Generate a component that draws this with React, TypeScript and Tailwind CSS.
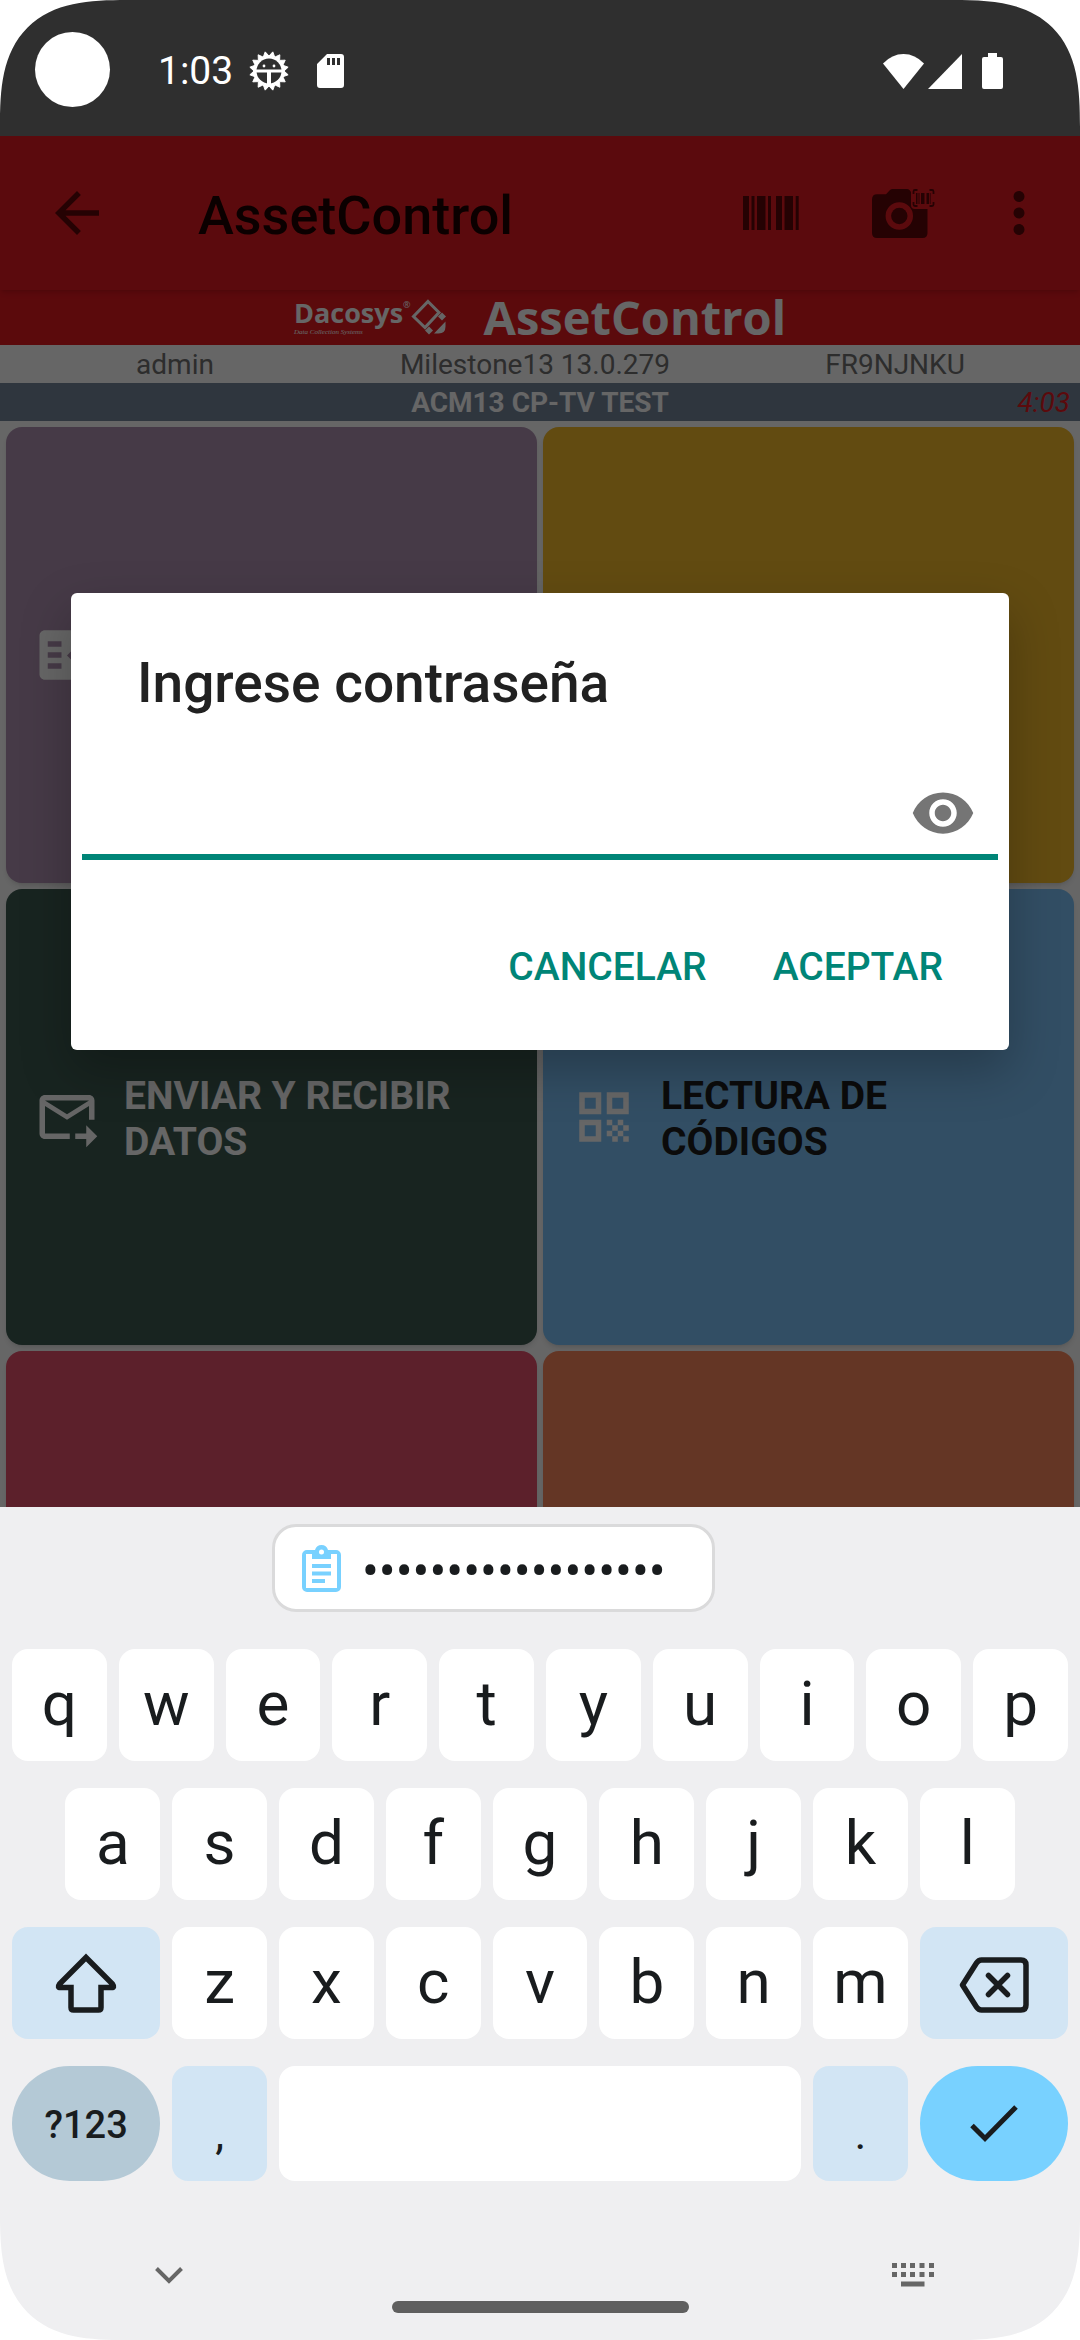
import React from "react";

type IconProps = { className?: string };

const gearPoints = Array.from({ length: 32 }, (_, i) => {
  const r = i % 2 === 0 ? 19.5 : 15;
  const a = ((i + 1) * Math.PI) / 16 - Math.PI / 2;
  return `${(20 + r * Math.cos(a)).toFixed(2)},${(20 + r * Math.sin(a)).toFixed(2)}`;
}).join(" ");

function DebugIcon() {
  return (
    <svg className="h-10 w-10" viewBox="0 0 40 40" aria-hidden="true">
      <polygon points={gearPoints} fill="#fff" stroke="#fff" strokeWidth="1" strokeLinejoin="round" />
      <circle cx="20" cy="20" r="12.5" fill="#2f2f2f" />
      <circle cx="15" cy="15" r="1.4" fill="#fff" />
      <circle cx="25" cy="15" r="1.4" fill="#fff" />
      <path d="M7 18.500h26v3H22V33h-4V21.500H7z" fill="#fff" />
    </svg>
  );
}

function SdIcon() {
  return (
    <svg className="h-[34px] w-[27px]" viewBox="0 0 27 34" aria-hidden="true">
      <path
        fillRule="evenodd"
        fill="#fff"
        d="M10 0h14a3 3 0 0 1 3 3v28a3 3 0 0 1-3 3H3a3 3 0 0 1-3-3V10zM10 4v7h3V4zm5 0v7h3V4zm5 0v7h3V4z"
      />
    </svg>
  );
}

function StatusBar() {
  return (
    <header className="flex h-[136px] shrink-0 items-center bg-[#2f2f2f] pt-1.5 pr-[77px] pl-[35px] text-white">
      <div className="mb-[3px] size-[75px] rounded-full bg-white" />
      <span className="ml-12 text-[39px] leading-[46px]">1:03</span>
      <div className="ml-4 flex items-center gap-7">
        <DebugIcon />
        <SdIcon />
      </div>
      <div className="ml-auto flex items-center">
        <svg className="h-[35px] w-[41px]" viewBox="0 0 41 35" aria-hidden="true">
          <path d="M0 9.500Q9 0 20.500 0T41 9.500L20.500 35z" fill="#fff" />
        </svg>
        <svg className="ml-1 h-[35px] w-[34px]" viewBox="0 0 34 35" aria-hidden="true">
          <path d="M34 0v35H0z" fill="#fff" />
        </svg>
        <svg className="ml-5 h-9 w-[21px]" viewBox="0 0 21 36" aria-hidden="true">
          <path d="M6 0h9v4h4a2 2 0 0 1 2 2v28a2 2 0 0 1-2 2H2a2 2 0 0 1-2-2V6a2 2 0 0 1 2-2h4z" fill="#fff" />
        </svg>
      </div>
    </header>
  );
}

function CameraScanIcon() {
  return (
    <svg className="h-[49px] w-[63px]" viewBox="0 0 63 49" aria-hidden="true">
      <path
        fillRule="evenodd"
        fill="currentColor"
        d="M14 5.300L18 1Q19 0 20.500 0H35Q36.500 0 37.500 1L39 3V16Q39 20 43 20H55.500V44Q55.500 49 50.500 49H5Q0 49 0 44V10.500Q0 5.300 5 5.300zM27.300 13.300a13.700 13.700 0 1 0 0 27.400a13.700 13.700 0 1 0 0-27.400z"
      />
      <circle cx="27.300" cy="27" r="8.200" fill="currentColor" />
      <path
        d="M45.500 1h-2.500q-1.500 0-1.500 1.500v2.500M57.500 1h2.500q1.500 0 1.500 1.500v2.500M45.500 17h-2.500q-1.500 0-1.500-1.500v-2.500M57.500 17h2.500q1.500 0 1.500-1.500v-2.500"
        fill="none"
        stroke="currentColor"
        strokeWidth="1.800"
      />
      <path d="M44 4h1.500v11H44zM46.500 4h1v11h-1zM49 4h3.500v11H49zM54.500 4H57v11h-2.500zM57.800 4h.8v11h-.8z" fill="currentColor" />
    </svg>
  );
}

function AppBar() {
  return (
    <div className="relative z-10 flex h-[154px] shrink-0 items-center bg-[#e41b21] pr-7 pl-11 text-[#5e0509] shadow-md">
      <button type="button" aria-label="Atrás">
        <svg className="size-[66px]" viewBox="0 0 24 24" fill="currentColor" aria-hidden="true">
          <path d="M20 11H7.830l5.590-5.590L12 4l-8 8 8 8 1.410-1.410L7.830 13H20v-2z" />
        </svg>
      </button>
      <h1 className="ml-[88px] pt-1.5 text-[54px] leading-[64px] font-medium text-[#1c0002]">AssetControl</h1>
      <button type="button" aria-label="Código de barras" className="ml-auto">
        <svg className="h-[34px] w-14" viewBox="0 0 56 34" fill="currentColor" aria-hidden="true">
          <path d="M0 0h6v34H0zM8.500 0h3v34h-3zM14 0h8.500v34H14zM25 0h3v34h-3zM33 0h6v34h-6zM41.500 0H50v34h-8.500zM52.700 0h3v34h-3z" />
        </svg>
      </button>
      <button type="button" aria-label="Cámara" className="ml-[73px]">
        <CameraScanIcon />
      </button>
      <button type="button" aria-label="Más opciones" className="ml-[51px]">
        <svg className="size-[66px]" viewBox="0 0 24 24" fill="currentColor" aria-hidden="true">
          <path d="M12 8c1.100 0 2-.9 2-2s-.9-2-2-2-2 .9-2 2 .9 2 2 2zm0 2c-1.100 0-2 .9-2 2s.9 2 2 2 2-.9 2-2-.9-2-2-2zm0 6c-1.100 0-2 .9-2 2s.9 2 2 2 2-.9 2-2-.9-2-2-2z" />
        </svg>
      </button>
    </div>
  );
}

function Banner() {
  return (
    <div className="flex h-[55px] shrink-0 items-center justify-center bg-[#e4191f] pb-0.5 font-['Open_Sans','Noto_Sans',sans-serif] text-white">
      <div className="flex flex-col">
        <span className="text-[27px] leading-[30px] font-bold">Dacosys</span>
        <span className="font-['Liberation_Serif',serif] text-[7px] leading-[8px] italic">Data Collection Systems</span>
      </div>
      <span className="mb-6 text-[9px] leading-[10px]">®</span>
      <svg className="h-9 w-[35px]" viewBox="0 0 35 36" aria-hidden="true">
        <path d="M17 2.500L28 13.500L14 28.500L2.500 17.500z" fill="none" stroke="#fff" strokeWidth="3" />
        <path d="M31 13.500l4 4-4 4-4-4zM18 27.500l4 4-4 4-4-4zM34.500 22.500v5q0 7-7 7h-4.500z" fill="#fff" />
      </svg>
      <span className="ml-[38px] text-[47px] leading-[50px] font-bold">AssetControl</span>
    </div>
  );
}

function InfoRows() {
  return (
    <>
      <div className="grid shrink-0 grid-cols-3 pt-0.5 text-center text-[28px] leading-9 text-[#707070]">
        <span className="pr-2.5">admin</span>
        <span className="pr-2.5">Milestone13 13.0.279</span>
        <span className="pr-2.5">FR9NJNKU</span>
      </div>
      <div className="grid shrink-0 grid-cols-[1fr_auto_1fr] bg-[#77879c] pt-0.5 text-[28px] leading-9">
        <span className="col-start-2 font-bold text-white">ACM13 CP-TV TEST</span>
        <span className="pr-2.5 text-right text-[#e4191f] italic">4:03</span>
      </div>
    </>
  );
}

function ListCheckIcon({ className }: IconProps) {
  return (
    <svg className={className} viewBox="0 0 24 24" fill="currentColor" aria-hidden="true">
      <path
        fillRule="evenodd"
        d="M20 3H4C2.900 3 2 3.900 2 5v14c0 1.100.9 2 2 2h16c1.100 0 2-.9 2-2V5c0-1.100-.9-2-2-2zM10 17H5v-2h5v2zm0-4H5v-2h5v2zm0-4H5V7h5v2zm4.820 6L12 12.160l1.410-1.410 1.410 1.420L17.990 9l1.420 1.420L14.820 15z"
      />
    </svg>
  );
}

function SendMailIcon({ className }: IconProps) {
  return (
    <svg className={className} viewBox="0 0 24 24" fill="currentColor" aria-hidden="true">
      <path d="M20 4H4C2.900 4 2 4.900 2 6v12c0 1.100.9 2 2 2h9v-2H4V8l8 5 8-5v5h2V6c0-1.100-.9-2-2-2zm-8 7L4 6h16l-8 5zm7 4l4 4-4 4v-3h-4v-2h4v-3z" />
    </svg>
  );
}

function QrIcon({ className }: IconProps) {
  return (
    <svg className={className} viewBox="0 0 24 24" fill="currentColor" aria-hidden="true">
      <path
        fillRule="evenodd"
        d="M3 11h8V3H3v8zm2-6h4v4H5V5zM3 21h8v-8H3v8zm2-6h4v4H5v-4zM13 3v8h8V3h-8zm6 6h-4V5h4v4zM19 19h2v2h-2zM13 13h2v2h-2zM15 15h2v2h-2zM13 17h2v2h-2zM15 19h2v2h-2zM17 17h2v2h-2zM17 13h2v2h-2zM19 15h2v2h-2z"
      />
    </svg>
  );
}

const cards: { name: string; color: string; text?: string; label?: string; Icon?: React.FC<IconProps> }[] = [
  { name: "Control", color: "bg-[#b091b2]", Icon: ListCheckIcon },
  { name: "Movimientos", color: "bg-[#f5bb2b]" },
  { name: "Enviar", color: "bg-[#3d5b52]", text: "text-white", label: "ENVIAR Y RECIBIR DATOS", Icon: SendMailIcon },
  { name: "Lectura", color: "bg-[#7dc4fa]", text: "text-[#1c1c1c]", label: "LECTURA DE CÓDIGOS", Icon: QrIcon },
  { name: "Consultas", color: "bg-[#e7506c]" },
  { name: "Ajustes", color: "bg-[#fb875d]" },
];

function Menu() {
  return (
    <main className="grid min-h-0 flex-1 auto-rows-[456px] grid-cols-2 gap-1.5 overflow-hidden p-1.5">
      {cards.map(({ name, color, text, label, Icon }) => (
        <button
          key={name}
          type="button"
          aria-label={label ?? name}
          className={`flex items-center rounded-2xl pr-10 pl-7 text-left shadow-md ${color}`}
        >
          {Icon && <Icon className="size-[66px] shrink-0 text-white" />}
          {label && <span className={`ml-6 pt-[3px] text-[39px] leading-[46px] font-bold ${text}`}>{label}</span>}
        </button>
      ))}
    </main>
  );
}

function PasswordDialog() {
  return (
    <div className="absolute inset-0 z-20 flex items-center bg-black/60 px-[71px]">
      <form
        role="dialog"
        aria-labelledby="password-title"
        onSubmit={(e) => e.preventDefault()}
        className="w-full rounded-md bg-white pt-[58px] pb-[50px] shadow-[0_20px_50px_rgba(0,0,0,0.25)]"
      >
        <h2 id="password-title" className="px-[66px] text-[55px] leading-[64px] font-medium text-[#212121]">
          Ingrese contraseña
        </h2>
        <div className="mx-[11px] mt-[57px] flex h-[88px] items-center border-b-[6px] border-[#008577] pr-[22px]">
          <input
            type="password"
            aria-labelledby="password-title"
            className="h-full min-w-0 flex-1 bg-transparent px-3 text-[50px] outline-none"
          />
          <button type="button" aria-label="Mostrar contraseña" className="text-[#757575]">
            <svg className="size-[66px]" viewBox="0 0 24 24" fill="currentColor" aria-hidden="true">
              <path d="M12 4.500C7 4.500 2.730 7.610 1 12c1.730 4.390 6 7.500 11 7.500s9.270-3.110 11-7.500c-1.730-4.390-6-7.500-11-7.500zM12 17c-2.760 0-5-2.240-5-5s2.240-5 5-5 5 2.240 5 5-2.240 5-5 5zm0-8c-1.660 0-3 1.340-3 3s1.340 3 3 3 3-1.340 3-3-1.340-3-3-3z" />
            </svg>
          </button>
        </div>
        <div className="mt-[74px] flex justify-end gap-[22px] pr-11 text-[39px] leading-[66px] font-medium text-[#008577]">
          <button type="button" className="px-[22px]">
            CANCELAR
          </button>
          <button type="submit" className="px-[22px]">
            ACEPTAR
          </button>
        </div>
      </form>
    </div>
  );
}

function LetterKey({ char }: { char: string }) {
  return (
    <button type="button" className="col-span-2 rounded-2xl bg-white pb-[3px] text-[62px] leading-[62px]">
      {char}
    </button>
  );
}

function Keyboard() {
  return (
    <footer className="flex shrink-0 flex-col bg-[#efeff1] text-[#191c1e]">
      <button
        type="button"
        aria-label="Pegar contraseña"
        className="mt-[17px] ml-[272px] flex h-22 items-center self-start rounded-3xl border-[3px] border-[#dadadb] bg-white pr-[46px] pl-[27px]"
      >
        <svg className="h-[47px] w-10" viewBox="0 0 40 47" aria-hidden="true">
          <path
            fillRule="evenodd"
            fill="#78d1ff"
            d="M5 5H13Q14.500 0 19.500 0T26 5H34a5 5 0 0 1 5 5V42a5 5 0 0 1-5 5H5a5 5 0 0 1-5-5V10a5 5 0 0 1 5-5zM4 9V43H35V9H29V14H10V9zM19.500 4.500a2.500 2.500 0 1 0 0 5a2.500 2.500 0 1 0 0-5z"
          />
          <path d="M10 19h19v4H10zM10 26.500h19v4H10zM10 34h13v4H10z" fill="#78d1ff" />
        </svg>
        <span className="ml-5 pt-1.5 text-[50px] leading-[60px]">••••••••••••••••••</span>
      </button>

      <div className="mt-[37px] flex flex-col gap-[27px] px-3">
        <div className="grid h-28 grid-cols-20 gap-x-3">
          {"qwertyuiop".split("").map((c) => (
            <LetterKey key={c} char={c} />
          ))}
        </div>
        <div className="grid h-28 grid-cols-20 gap-x-3">
          <span />
          {"asdfghjkl".split("").map((c) => (
            <LetterKey key={c} char={c} />
          ))}
        </div>
        <div className="grid h-28 grid-cols-20 gap-x-3">
          <button type="button" aria-label="Mayúsculas" className="col-span-3 flex items-center justify-center rounded-2xl bg-[#d2e5f4]">
            <svg className="h-[60px] w-[62px]" viewBox="0 0 62 60" aria-hidden="true">
              <path
                d="M31 4.500L57.500 31Q60 34.500 56.500 34.500H46V54.500Q46 57 43.500 57H18.500Q16 57 16 54.500V34.500H5.500Q2 34.500 4.500 31z"
                fill="none"
                stroke="#191c1e"
                strokeWidth="5.500"
              />
            </svg>
          </button>
          {"zxcvbnm".split("").map((c) => (
            <LetterKey key={c} char={c} />
          ))}
          <button type="button" aria-label="Borrar" className="col-span-3 flex items-center justify-center rounded-2xl bg-[#d2e5f4] pt-1">
            <svg className="h-14 w-[70px]" viewBox="0 0 70 56" aria-hidden="true">
              <path
                d="M22.500 3H62Q67 3 67 8V48Q67 53 62 53H22.500Q19.500 53 17.500 50L3.500 28L17.500 6Q19.500 3 22.500 3z"
                fill="none"
                stroke="#191c1e"
                strokeWidth="5.500"
                strokeLinejoin="round"
              />
              <path d="M29.500 18.500l19 19m0-19l-19 19" stroke="#191c1e" strokeWidth="5.500" strokeLinecap="round" />
            </svg>
          </button>
        </div>
        <div className="grid h-[115px] grid-cols-20 gap-x-3">
          <button type="button" className="col-span-3 rounded-full bg-[#b4c9d6] pt-1 text-[38px] font-medium">
            ?123
          </button>
          <button type="button" className="col-span-2 rounded-2xl bg-[#d2e5f4] pt-5 text-[45px]">
            ,
          </button>
          <button type="button" aria-label="Espacio" className="col-span-10 rounded-2xl bg-white" />
          <button type="button" className="col-span-2 rounded-2xl bg-[#d2e5f4] pt-5 text-[45px]">
            .
          </button>
          <button type="button" aria-label="Listo" className="col-span-3 flex items-center justify-center rounded-full bg-[#78d1ff]">
            <svg className="h-[38px] w-12" viewBox="0 0 48 38" aria-hidden="true">
              <path d="M2 20.500L15 33.500L46 2" fill="none" stroke="#191c1e" strokeWidth="5" />
            </svg>
          </button>
        </div>
      </div>

      <div className="mt-[82px] flex h-6 items-center justify-between pr-[146px] pl-[155px]">
        <button type="button" aria-label="Ocultar teclado">
          <svg className="h-[17px] w-7" viewBox="0 0 28 17" aria-hidden="true">
            <path d="M1.500 1.500L14 14L26.500 1.500" fill="none" stroke="#666" strokeWidth="4" />
          </svg>
        </button>
        <button type="button" aria-label="Cambiar teclado">
          <svg className="h-6 w-[42px]" viewBox="0 0 42 24" fill="#666" aria-hidden="true">
            <path d="M0 0h5v5H0zM9 0h5v5H9zM18 0h5v5h-5zM27.500 0h5v5h-5zM37 0h5v5h-5zM0 9h5v5H0zM9 9h5v5H9zM18 9h5v5h-5zM27.500 9h5v5h-5zM37 9h5v5h-5zM9 18.500h23.500v5H9z" />
          </svg>
        </button>
      </div>
      <div className="mt-3.5 mb-[27px] h-3 w-[297px] self-center rounded-full bg-[#5f5f5f]" />
    </footer>
  );
}

export default function App() {
  return (
    <div className="flex h-screen flex-col overflow-hidden rounded-[106px] bg-white font-[Roboto,sans-serif] supports-[corner-shape:squircle]:rounded-[127px] supports-[corner-shape:squircle]:[corner-shape:superellipse(1.5)]">
      <StatusBar />
      <div className="relative flex min-h-0 flex-1 flex-col overflow-hidden bg-white">
        <AppBar />
        <Banner />
        <InfoRows />
        <Menu />
        <PasswordDialog />
      </div>
      <Keyboard />
    </div>
  );
}
